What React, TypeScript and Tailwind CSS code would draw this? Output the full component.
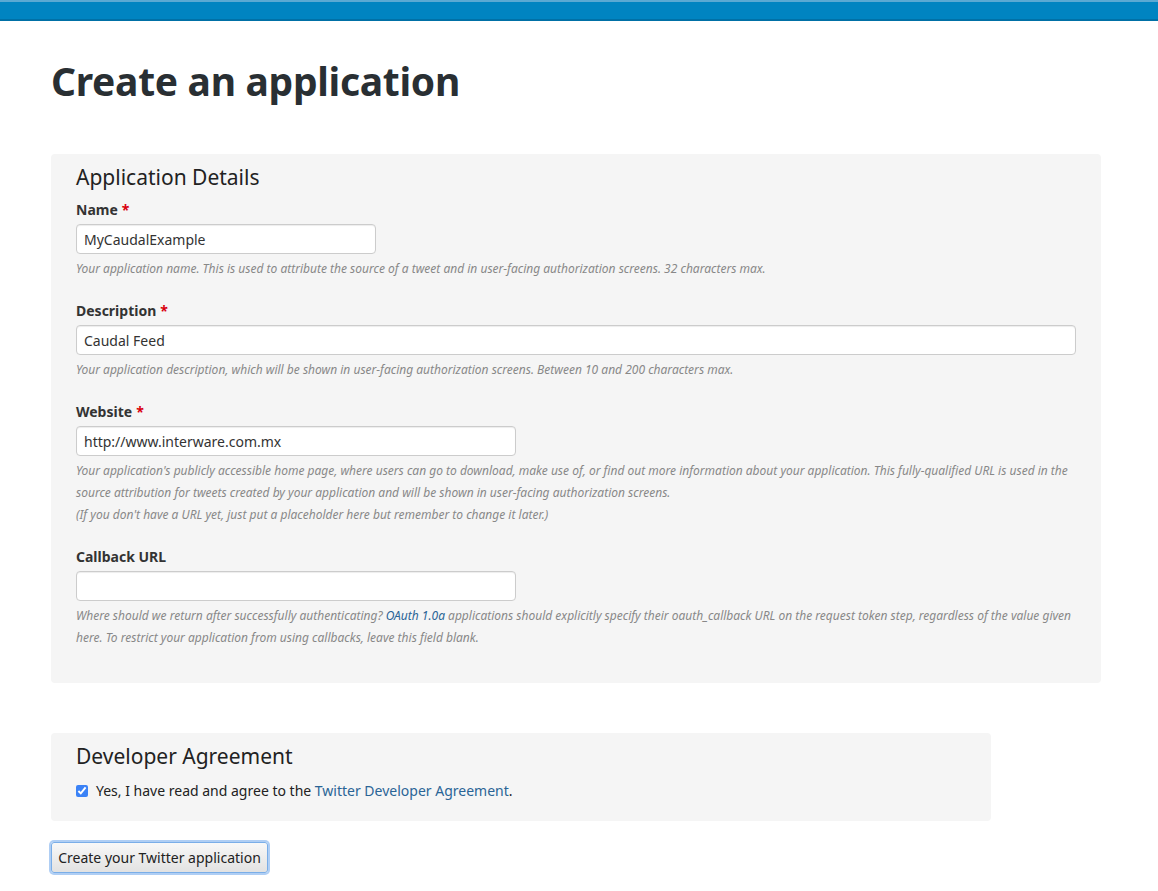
const help = "mt-[4px] text-[12px] italic leading-[22px] text-[#888]"
const label = "block text-[14px] font-bold leading-[20px] text-[#333]"
const input = "mt-[4px] block h-[30px] rounded-[4px] border border-[#ccc] bg-white px-[7px] text-[14px] text-[#333] shadow-[inset_0_1px_1px_rgba(0,0,0,0.075)]"

function Star() {
  return <span className="ml-1 text-[#d9000d]">*</span>
}

export default function App() {
  return (
    <div className="min-h-screen bg-white font-['Liberation_Sans',Arial,sans-serif] text-[#333]">
      <div className="h-[21px] border-t-2 border-[#5aa9d3] bg-[#0084c1] shadow-[inset_0_-2px_0_#0070a6]" />
      <div className="px-[51px]">
        <h1 className="mt-[36px] font-['Lato','Liberation_Sans',sans-serif] text-[39px] font-bold leading-[48px] tracking-[-0.3px] text-[#292f33]">
          Create an application
        </h1>

        <section className="mt-[49px] w-[1050px] rounded-[4px] bg-[#f5f5f5] px-[25px] pb-[34px] pt-[9px]">
          <h2 className="text-[21px] leading-[28px] text-[#222]">Application Details</h2>

          <div className="mt-[9px]">
            <label className={label}>Name<Star /></label>
            <input className={`${input} w-[300px]`} defaultValue="MyCaudalExample" />
            <p className={help}>Your application name. This is used to attribute the source of a tweet and in user-facing authorization screens. 32 characters max.</p>
          </div>

          <div className="mt-[21px]">
            <label className={label}>Description<Star /></label>
            <input className={`${input} w-[1000px]`} defaultValue="Caudal Feed" />
            <p className={help}>Your application description, which will be shown in user-facing authorization screens. Between 10 and 200 characters max.</p>
          </div>

          <div className="mt-[21px]">
            <label className={label}>Website<Star /></label>
            <input className={`${input} w-[440px]`} defaultValue="http://www.interware.com.mx" />
            <p className={help}>
              Your application's publicly accessible home page, where users can go to download, make use of, or find out more information about your application. This fully-qualified URL is used in the source attribution for tweets created by your application and will be shown in user-facing authorization screens.
              <br />
              (If you don't have a URL yet, just put a placeholder here but remember to change it later.)
            </p>
          </div>

          <div className="mt-[21px]">
            <label className={label}>Callback URL</label>
            <input className={`${input} w-[440px]`} />
            <p className={help}>
              Where should we return after successfully authenticating? <a className="text-[#2a6496]">OAuth 1.0a</a> applications should explicitly specify their oauth_callback URL on the request token step, regardless of the value given here. To restrict your application from using callbacks, leave this field blank.
            </p>
          </div>
        </section>

        <section className="mt-[50px] w-[940px] rounded-[4px] bg-[#f5f5f5] px-[25px] pb-[20px] pt-[9px]">
          <h2 className="text-[21px] leading-[28px] text-[#222]">Developer Agreement</h2>
          <label className="mt-[10px] flex items-center gap-[8px] text-[14px] text-[#222]">
            <input type="checkbox" defaultChecked className="h-[12px] w-[12px] accent-[#3b82f6]" />
            <span>Yes, I have read and agree to the <a className="text-[#2a6496]">Twitter Developer Agreement</a>.</span>
          </label>
        </section>

        <button className="mt-[21px] h-[31px] w-[217px] rounded-[3px] border border-[#7aaee8] bg-gradient-to-b from-[#f8f8f8] to-[#e2e2e2] text-[14px] text-[#222] shadow-[0_0_0_2px_rgba(110,165,235,0.55)]">
          Create your Twitter application
        </button>
      </div>
    </div>
  )
}
